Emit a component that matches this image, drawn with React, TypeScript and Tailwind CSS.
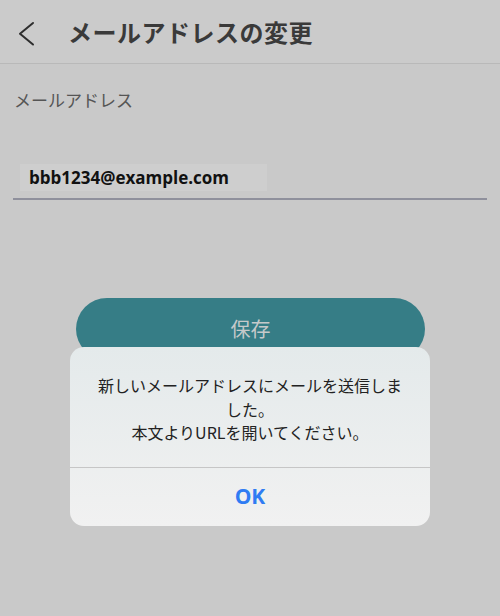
const jp = "font-['Noto_Sans_CJK_JP','Noto_Sans',sans-serif]";

function BackIcon() {
  return (
    <svg width="20" height="28" viewBox="0 0 20 28" fill="none" className="text-[#2e2e2e]">
      <polyline points="15,3 2,13.8 15,24.5" stroke="currentColor" strokeWidth="2" strokeLinecap="round" strokeLinejoin="round" />
    </svg>
  );
}

export default function App() {
  return (
    <div className={`relative h-[616px] w-[500px] overflow-hidden bg-[#c9c9c9] ${jp}`}>
      {/* header */}
      <header className="flex h-[64px] items-center border-b border-[#b9b9b9] bg-[#cbcbcb]">
        <div className="flex w-[68px] items-center pl-[18px] pt-[4px]">
          <BackIcon />
        </div>
        <h1 className="text-[24px] font-bold leading-none tracking-[0.5px] text-[#3a3a3a]">
          メールアドレスの変更
        </h1>
      </header>

      {/* form */}
      <div className="px-[13px] pt-[25px]">
        <label className="block pl-[1px] text-[17px] leading-[22px] text-[#555]">
          メールアドレス
        </label>
        <div className="mt-[53px] border-b-2 border-[#8f909c] pb-[7px] pl-[7px]">
          <div className="flex h-[27px] w-[247px] items-center bg-[#cecece] pl-[9px] font-['Open_Sans','Noto_Sans',sans-serif] text-[17px] font-bold text-[#111]">
            bbb1234@example.com
          </div>
        </div>
      </div>

      <div className="flex justify-center pt-[98px]">
        <button className="ml-[1px] flex h-[62px] w-[349px] items-center justify-center rounded-full bg-[#367d86] text-[20px] text-[#c5c9ca]">
          保存
        </button>
      </div>

      {/* alert dialog */}
      <div className="absolute left-[70px] top-[347px] w-[360px] overflow-hidden rounded-[14px] bg-gradient-to-b from-[#e4eaeb] to-[#f1f1f1]">
        <p className="border-b border-[#c6c6c6] px-[24px] pb-[22px] pt-[27px] text-center text-[16px] leading-[23.5px] text-[#222]">
          新しいメールアドレスにメールを送信しました。
          <br />
          本文よりURLを開いてください。
        </p>
        <div className="flex h-[58px] items-center justify-center font-['Open_Sans','Noto_Sans',sans-serif] text-[21px] font-bold text-[#2f7cf3]">
          OK
        </div>
      </div>
    </div>
  );
}
